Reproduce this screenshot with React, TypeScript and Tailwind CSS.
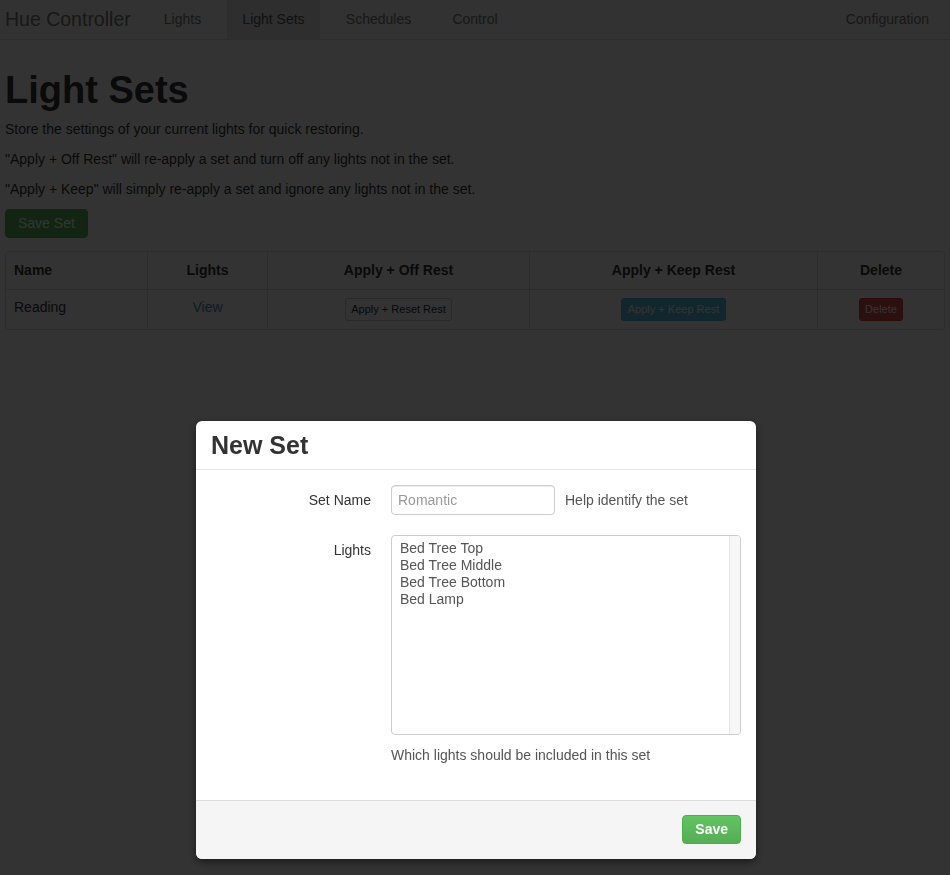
import React from "react";

const navItems = [
    { label: "Lights", width: "w-[69px]" },
    { label: "Light Sets", width: "w-[93px]", active: true },
    { label: "Schedules", width: "w-[97px]" },
    { label: "Control", width: "w-[76px]" },
];

const lights = ["Bed Tree Top", "Bed Tree Middle", "Bed Tree Bottom", "Bed Lamp"];

function NavBar() {
    return (
        <div className="h-[40px] bg-[#f8f8f8] border-b border-[#e0e0e0] flex items-stretch">
            <div className="w-[143px] ml-[5px] flex items-center text-[19.5px] text-[#777]">Hue Controller</div>
            <ul className="flex gap-[10px]">
                {navItems.map((item) => (
                    <li
                        key={item.label}
                        className={`${item.width} flex items-center justify-center text-[14px] ${item.active ? "bg-[#e5e5e5] text-[#555]" : "text-[#777]"}`}
                    >
                        {item.label}
                    </li>
                ))}
            </ul>
            <div className="ml-auto mr-[6px] px-[15px] flex items-center text-[14px] text-[#777]">Configuration</div>
        </div>
    );
}

function SetsTable() {
    return (
        <table className="mt-[13px] w-[940px] table-fixed border-separate border-spacing-0 border border-[#ddd] rounded-[4px] text-[14px] text-[#333]">
            <colgroup>
                <col className="w-[141px]" />
                <col className="w-[120px]" />
                <col className="w-[262px]" />
                <col className="w-[288px]" />
                <col className="w-[127px]" />
            </colgroup>
            <thead>
                <tr className="h-[37px]">
                    <th className="px-[8px] text-left font-bold">Name</th>
                    <th className="px-[8px] text-center font-bold border-l border-[#ddd]">Lights</th>
                    <th className="px-[8px] text-center font-bold border-l border-[#ddd]">Apply + Off Rest</th>
                    <th className="px-[8px] text-center font-bold border-l border-[#ddd]">Apply + Keep Rest</th>
                    <th className="px-[8px] text-center font-bold border-l border-[#ddd]">Delete</th>
                </tr>
            </thead>
            <tbody>
                <tr className="h-[40px]">
                    <td className="px-[8px] pb-[4px] border-t border-[#ddd]">Reading</td>
                    <td className="px-[8px] pb-[4px] text-center border-t border-l border-[#ddd] text-[#428bca]">View</td>
                    <td className="px-[8px] text-center border-t border-l border-[#ddd]">
                        <span className="inline-block h-[23px] leading-[21px] px-[5px] text-[11px] border border-[#ccc] rounded-[3px] bg-[#fff] text-[#333]">
                            Apply + Reset Rest
                        </span>
                    </td>
                    <td className="px-[8px] text-center border-t border-l border-[#ddd]">
                        <span className="inline-block h-[23px] leading-[21px] px-[6px] text-[11px] border border-[#46b8da] rounded-[3px] bg-[#5bc0de] text-white">
                            Apply + Keep Rest
                        </span>
                    </td>
                    <td className="px-[8px] text-center border-t border-l border-[#ddd]">
                        <span className="inline-block h-[23px] leading-[21px] px-[5px] text-[11px] border border-[#d43f3a] rounded-[3px] bg-[#d9534f] text-white">
                            Delete
                        </span>
                    </td>
                </tr>
            </tbody>
        </table>
    );
}

function NewSetModal() {
    return (
        <div className="fixed left-[196px] top-[421px] w-[560px] bg-white rounded-[6px] shadow-[0_3px_9px_rgba(0,0,0,0.5)] text-[14px] text-[#333]">
            <div className="h-[49px] px-[15px] flex items-center border-b border-[#e5e5e5]">
                <h3 className="text-[25px] font-bold leading-[26px] mt-[-1px]">New Set</h3>
            </div>
            <div className="px-[15px] pt-[15px] pb-[35px]">
                <div className="flex items-center">
                    <label className="w-[160px] text-right">Set Name</label>
                    <input
                        className="ml-[20px] w-[164px] h-[30px] px-[6px] border border-[#ccc] rounded-[4px] shadow-[inset_0_1px_1px_rgba(0,0,0,0.075)] text-[14px] text-[#555] placeholder:text-[#999] outline-none"
                        placeholder="Romantic"
                    />
                    <span className="ml-[10px] text-[#555]">Help identify the set</span>
                </div>
                <div className="flex mt-[20px]">
                    <label className="w-[160px] text-right pt-[5px] leading-[20px]">Lights</label>
                    <div className="ml-[20px]">
                        <div className="w-[350px] h-[200px] border border-[#ccc] rounded-[4px] flex overflow-hidden">
                            <ul className="flex-1 pt-[4px] pl-[8px] text-[#555] leading-[17px]">
                                {lights.map((name) => (
                                    <li key={name}>{name}</li>
                                ))}
                            </ul>
                            <div className="w-[11px] bg-[#f7f7f7] border-l border-[#e8e8e8]" />
                        </div>
                        <p className="mt-[10px] leading-[20px] text-[#555]">Which lights should be included in this set</p>
                    </div>
                </div>
            </div>
            <div className="border-t border-[#ddd] bg-[#f5f5f5] rounded-b-[6px] pt-[14px] pb-[15px] px-[15px] flex justify-end">
                <button className="h-[29px] px-[12px] border border-[#4cae4c] rounded-[4px] bg-gradient-to-b from-[#62c462] to-[#55ad55] text-white text-[14px] font-bold">
                    Save
                </button>
            </div>
        </div>
    );
}

export default function App() {
    return (
        <div className="min-h-[875px] bg-white font-['Liberation_Sans',Arial,sans-serif] text-[#333]">
            <NavBar />
            <div className="px-[5px]">
                <h1 className="mt-[30px] mb-[9px] text-[38px] leading-[40px] font-bold">Light Sets</h1>
                <p className="text-[14px] leading-[20px] mb-[10px]">Store the settings of your current lights for quick restoring.</p>
                <p className="text-[14px] leading-[20px] mb-[10px]">"Apply + Off Rest" will re-apply a set and turn off any lights not in the set.</p>
                <p className="text-[14px] leading-[20px] mb-[10px]">"Apply + Keep" will simply re-apply a set and ignore any lights not in the set.</p>
                <button className="h-[29px] px-[12px] border border-[#4cae4c] rounded-[4px] bg-[#5cb85c] text-white text-[14px]">Save Set</button>
                <SetsTable />
            </div>
            <div className="fixed inset-0 bg-black/80" />
            <NewSetModal />
        </div>
    );
}
